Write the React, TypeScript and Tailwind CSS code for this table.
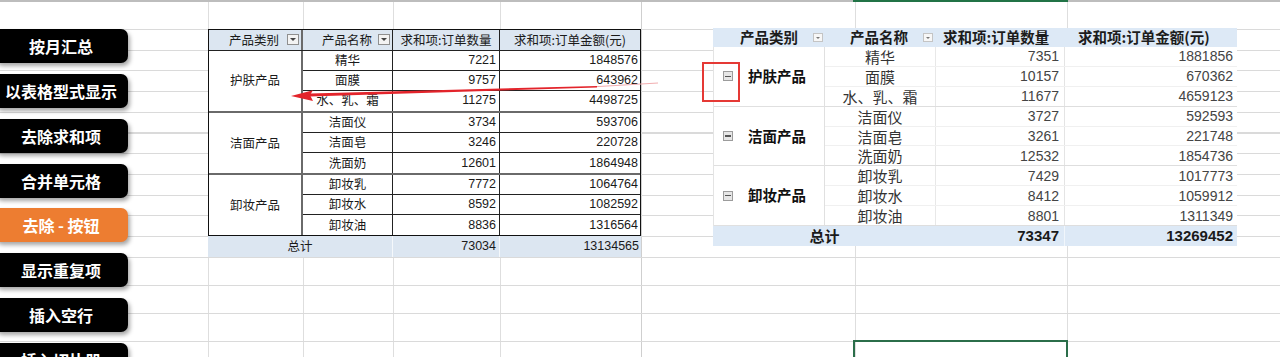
import React from "react";

type Group = { cat: string; items: [string, number, number][] };

const leftGroups: Group[] = [
  { cat: "护肤产品", items: [["精华", 7221, 1848576], ["面膜", 9757, 643962], ["水、乳、霜", 11275, 4498725]] },
  { cat: "洁面产品", items: [["洁面仪", 3734, 593706], ["洁面皂", 3246, 220728], ["洗面奶", 12601, 1864948]] },
  { cat: "卸妆产品", items: [["卸妆乳", 7772, 1064764], ["卸妆水", 8592, 1082592], ["卸妆油", 8836, 1316564]] },
];

const rightGroups: Group[] = [
  { cat: "护肤产品", items: [["精华", 7351, 1881856], ["面膜", 10157, 670362], ["水、乳、霜", 11677, 4659123]] },
  { cat: "洁面产品", items: [["洁面仪", 3727, 592593], ["洁面皂", 3261, 221748], ["洗面奶", 12532, 1854736]] },
  { cat: "卸妆产品", items: [["卸妆乳", 7429, 1017773], ["卸妆水", 8412, 1059912], ["卸妆油", 8801, 1311349]] },
];

const buttons = ["按月汇总", "以表格型式显示", "去除求和项", "合并单元格", "去除 - 按钮", "显示重复项", "插入空行", "插入切片器"];

const num = "font-['Liberation_Sans',Arial,sans-serif]";

const LeftDrop = () => (
  <span className="w-[12px] h-[11px] border border-[#8f8f8f] bg-[#f3f3f3] flex items-center justify-center shrink-0">
    <span className="border-x-[3px] border-t-[3px] border-x-transparent border-t-[#444]" />
  </span>
);

const RightDrop = () => (
  <span className="w-[10px] h-[9px] border border-[#c4c4c4] bg-[#f7f7f7] flex items-center justify-center shrink-0">
    <span className="border-x-[2.5px] border-t-[2.5px] border-x-transparent border-t-[#777]" />
  </span>
);

const Collapse = () => (
  <span className="w-[10px] h-[10px] border border-[#9c9c9c] bg-[#e6e6e6] flex items-center justify-center shrink-0">
    <span className="w-[6px] h-[1.5px] bg-[#555]" />
  </span>
);

const SideButtons = () => (
  <div className="w-[208px] shrink-0 flex flex-col gap-[10.86px] pt-[29px]">
    {buttons.map((b) => (
      <div
        key={b}
        className={`-ml-[6px] w-[134px] h-[34px] shrink-0 rounded-[7px] flex items-center justify-center text-white font-bold text-[16px] leading-none shadow-[2px_3px_4px_rgba(0,0,0,0.35)] ${
          b === "去除 - 按钮" ? "bg-[#ed7d31]" : "bg-black"
        }`}
      >
        {b}
      </div>
    ))}
  </div>
);

const LeftTable = () => (
  <div className="w-[433px] shrink-0 self-start mt-[29px] text-[12.5px] leading-none text-[#1a1a1a]">
    <div className="border-x border-t border-[#111] bg-white">
      <div className="flex h-[20.5px] bg-[#dce6f1] border-b border-[#222]">
        <div className="w-[94px] flex items-center justify-end gap-[8px] pr-[2px] border-r-2 border-[#6a6a6a]">
          产品类别
          <LeftDrop />
        </div>
        <div className="w-[90px] flex items-center justify-end gap-[6px] pr-[2px] border-r border-[#222]">
          产品名称
          <LeftDrop />
        </div>
        <div className="w-[107px] flex items-center justify-center border-r border-[#222]">求和项:订单数量</div>
        <div className="flex-1 flex items-center justify-center">求和项:订单金额(元)</div>
      </div>
      {leftGroups.map((g, gi) => (
        <div
          key={g.cat}
          className={`flex ${gi < 2 ? "border-b-2 border-[#6a6a6a]" : "border-b border-[#111]"}`}
        >
          <div className="w-[94px] flex items-center justify-center border-r-2 border-[#6a6a6a]">{g.cat}</div>
          <div className="flex-1 flex flex-col">
            {g.items.map(([name, qty, amt], i) => (
              <div key={name} className={`flex h-[20.1px] ${i < 2 ? "border-b border-[#222]" : ""}`}>
                <div className="w-[90px] flex items-center justify-center border-r border-[#222]">{name}</div>
                <div className={`w-[107px] flex items-center justify-end pr-[3px] border-r border-[#222] ${num}`}>{qty}</div>
                <div className={`flex-1 flex items-center justify-end pr-[2px] ${num}`}>{amt}</div>
              </div>
            ))}
          </div>
        </div>
      ))}
    </div>
    <div className="flex h-[20.7px] bg-[#dce6f1]">
      <div className="w-[185px] flex items-center justify-center border-r border-white/70">总计</div>
      <div className={`w-[107px] flex items-center justify-end pr-[3px] border-r border-white/70 ${num}`}>73034</div>
      <div className={`flex-1 flex items-center justify-end pr-[2px] ${num}`}>13134565</div>
    </div>
  </div>
);

const RightTable = () => (
  <div className="relative w-[524px] shrink-0 self-start mt-[28px] leading-none text-[#1c1c1c]">
    <div className="flex h-[19px] bg-[#dde9f6] font-bold text-[14.5px]">
      <div className="w-[112px] flex items-center pl-[27px] pr-[2px]">
        产品类别
        <span className="ml-auto">
          <RightDrop />
        </span>
      </div>
      <div className="w-[111px] flex items-center pl-[25px] pr-[3px]">
        产品名称
        <span className="ml-auto">
          <RightDrop />
        </span>
      </div>
      <div className="w-[129px] flex items-center pl-[7px]">求和项:订单数量</div>
      <div className="flex-1 flex items-center pl-[13px]">求和项:订单金额(元)</div>
    </div>
    <div className="bg-white border-l border-[#e4e4e4]">
      {rightGroups.map((g) => (
        <div key={g.cat} className="flex">
          <div className="w-[111px] flex items-center pl-[9px] border-r border-b border-[#e0e0e0]">
            <Collapse />
            <span className="ml-[15px] font-bold text-[14.5px] text-[#111]">{g.cat}</span>
          </div>
          <div className="flex-1 flex flex-col">
            {g.items.map(([name, qty, amt], i) => (
              <div
                key={name}
                className={`flex h-[19.9px] border-b ${i < 2 ? "border-[#f0f0f0]" : "border-[#dedede]"}`}
              >
                <div className="w-[111px] flex items-center justify-center text-[15px] text-[#333] border-r border-[#e8e8e8]">
                  {name}
                </div>
                <div className={`w-[129px] flex items-center justify-end pr-[5px] text-[14px] text-[#444] border-r border-[#e4e4e4] ${num}`}>
                  {qty}
                </div>
                <div className={`flex-1 flex items-center justify-end pr-[4px] text-[14px] text-[#444] ${num}`}>{amt}</div>
              </div>
            ))}
          </div>
        </div>
      ))}
    </div>
    <div className="flex h-[19.9px] bg-[#dde9f6] font-bold text-[15px] text-[#1a1a1a]">
      <div className="w-[223px] flex items-center justify-center">总计</div>
      <div className={`w-[129px] flex items-center justify-end pr-[5px] border-r border-white/60 ${num}`}>73347</div>
      <div className={`flex-1 flex items-center justify-end pr-[4px] ${num}`}>13269452</div>
    </div>
    {/* red highlight box around the collapse button */}
    <div className="absolute -left-[11px] top-[34px] w-[38px] h-[40px] border-2 border-[#e53935]" />
  </div>
);

export default function App() {
  return (
    <div
      className="relative w-[1280px] h-[357px] overflow-hidden flex bg-white font-['Noto_Sans_CJK_SC',sans-serif] bg-no-repeat bg-[repeating-linear-gradient(to_bottom,#dadada_0_1px,transparent_1px_20.7px),repeating-linear-gradient(to_bottom,#dadada_0_1px,transparent_1px_28px),linear-gradient(#bdbdbd,#bdbdbd),linear-gradient(#dedede,#dedede),linear-gradient(#dedede,#dedede),linear-gradient(#dedede,#dedede),linear-gradient(#dedede,#dedede),linear-gradient(#cfcfcf,#cfcfcf),linear-gradient(#dedede,#dedede),linear-gradient(#dedede,#dedede)] bg-size-[100%_227px,100%_101px,100%_2px,1px_100%,1px_100%,1px_100%,1px_100%,1px_100%,1px_100%,1px_100%] bg-position-[0_28.5px,0_256.5px,0_0,208px_0,303px_0,393px_0,500px_0,641px_0,855px_0,1067px_0]"
    >
      <SideButtons />
      <LeftTable />
      <div className="w-[72px] shrink-0" />
      <RightTable />

      {/* selected cell of the second sheet */}
      <div className="absolute left-[853px] top-0 w-[215px] h-[2px] bg-[#217346]" />
      <div className="absolute left-[853px] top-[340px] w-[215px] h-[30px] border-2 border-[#2b6e4a]" />

      <svg className="absolute left-0 top-0 pointer-events-none" width={1280} height={357}>
        <line x1="597" y1="86.6" x2="658" y2="83" stroke="#f2aeb0" strokeWidth="1" />
        <polygon points="597,86 597,87.4 310,96.6 310,93.6" fill="#e3242b" />
        <polygon points="291,96 313,90.3 310,95 313,101" fill="#e3242b" />
      </svg>
    </div>
  );
}
